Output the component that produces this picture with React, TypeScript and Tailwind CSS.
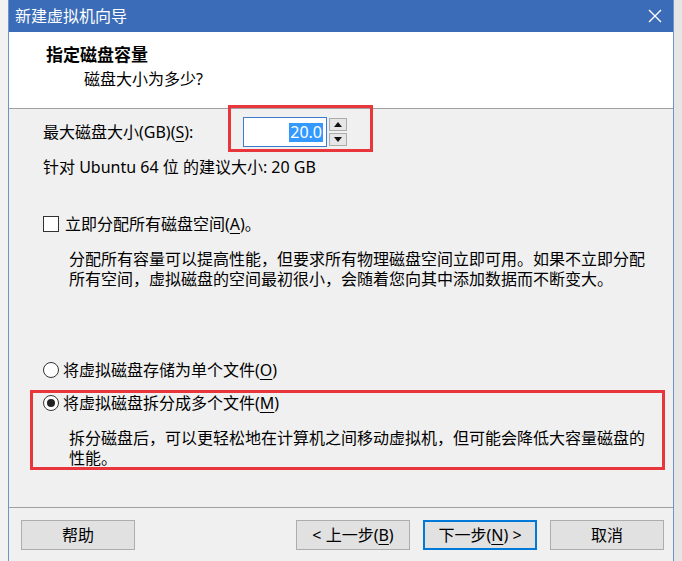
const U = ({ children }: { children: string }) => (
  <span className="underline underline-offset-[3px] decoration-1">{children}</span>
);

const Btn = ({ children, primary }: { children: React.ReactNode; primary?: boolean }) => (
  <button
    className={
      primary
        ? "w-[114px] h-[30px] bg-[#e1e1e1] border-2 border-[#0078d7] text-[16px] leading-[20px]"
        : "w-[114px] h-[30px] bg-[#e1e1e1] border border-[#adadad] text-[16px] leading-[20px]"
    }
  >
    {children}
  </button>
);

const SpinArrow = ({ up }: { up?: boolean }) => (
  <svg width="8" height="5" viewBox="0 0 8 5">
    <path d={up ? "M0 5 L4 0 L8 5 Z" : "M0 0 L4 5 L8 0 Z"} fill="#111" />
  </svg>
);

export default function App() {
  return (
    <div className="w-[682px] h-[561px] flex overflow-hidden bg-[#ececec] text-black font-['Noto_Sans','Noto_Sans_CJK_SC',sans-serif]">
      <div className="w-[8px] shrink-0 bg-[#f2f2f2]" />

      <div className="relative w-[666px] shrink-0 h-full flex flex-col border-x border-[#6f93cc] bg-[#f0f0f0]">
        {/* title bar */}
        <div className="h-[32px] shrink-0 bg-[#3b6cb7] flex items-center justify-between pl-[6px] pr-[10px]">
          <span className="text-white text-[16px] leading-[20px]">新建虚拟机向导</span>
          <svg width="16" height="16" viewBox="0 0 16 16">
            <path d="M2 2 L14 14 M14 2 L2 14" stroke="#fff" strokeWidth="1.4" />
          </svg>
        </div>

        {/* header */}
        <div className="h-[77px] shrink-0 bg-white border-b border-[#a0a0a0] pt-[12px] flex flex-col">
          <div className="pl-[37px] text-[17px] leading-[22px] font-bold">指定磁盘容量</div>
          <div className="pl-[75px] mt-[2px] text-[16px] leading-[22px]">磁盘大小为多少?</div>
        </div>

        {/* body */}
        <div className="h-[398px] shrink-0 pt-[8px] pl-[34px] pr-[10px] flex flex-col text-[16px] leading-[20px]">
          <div className="flex items-center h-[30px]">
            <span className="w-[200px] shrink-0">
              最大磁盘大小(GB)(<U>S</U>):
            </span>
            <div className="w-[84px] h-[30px] bg-white border border-[#3d7bd0] flex items-center justify-end pr-[3px]">
              <span className="bg-[#3399ff] text-white px-[1px] leading-[19px]">20.0</span>
            </div>
            <div className="w-[20px] h-[30px] flex flex-col justify-between py-[1px] pl-[2px]">
              <div className="h-[13px] bg-[#e6e6e6] border border-[#acacac] flex items-center justify-center">
                <SpinArrow up />
              </div>
              <div className="h-[13px] bg-[#e6e6e6] border border-[#acacac] flex items-center justify-center">
                <SpinArrow />
              </div>
            </div>
          </div>

          <div className="mt-[10px]">针对 Ubuntu 64 位 的建议大小: 20 GB</div>

          <div className="mt-[37px] flex items-center gap-[6px]">
            <span className="w-[16px] h-[16px] border border-[#333] bg-white shrink-0" />
            <span>
              立即分配所有磁盘空间(<U>A</U>)。
            </span>
          </div>
          <div className="mt-[15px] pl-[26px] whitespace-nowrap">
            分配所有容量可以提高性能，但要求所有物理磁盘空间立即可用。如果不立即分配
            <br />
            所有空间，虚拟磁盘的空间最初很小，会随着您向其中添加数据而不断变大。
          </div>

          <div className="mt-[71px] flex items-center gap-[4px]">
            <span className="w-[16px] h-[16px] rounded-full border border-[#333] bg-white shrink-0" />
            <span>
              将虚拟磁盘存储为单个文件(<U>O</U>)
            </span>
          </div>
          <div className="mt-[13px] flex items-center gap-[4px]">
            <span className="w-[16px] h-[16px] rounded-full border border-[#333] bg-white shrink-0 flex items-center justify-center">
              <span className="w-[8px] h-[8px] rounded-full bg-[#222]" />
            </span>
            <span>
              将虚拟磁盘拆分成多个文件(<U>M</U>)
            </span>
          </div>
          <div className="mt-[15px] pl-[26px] whitespace-nowrap">
            拆分磁盘后，可以更轻松地在计算机之间移动虚拟机，但可能会降低大容量磁盘的
            <br />
            性能。
          </div>
        </div>

        {/* footer */}
        <div className="flex-1 border-t border-[#a0a0a0] pt-[12px] pl-[12px] pr-[9px] flex items-start">
          <Btn>帮助</Btn>
          <div className="flex-1" />
          <div className="flex gap-[13px]">
            <Btn>
              &lt; 上一步(<U>B</U>)
            </Btn>
            <Btn primary>
              下一步(<U>N</U>) &gt;
            </Btn>
            <Btn>取消</Btn>
          </div>
        </div>

        {/* red annotation boxes */}
        <div className="absolute left-[219px] top-[105px] w-[145px] h-[47px] border-[3px] border-[#e8363c] pointer-events-none" />
        <div className="absolute left-[21px] top-[390px] w-[635px] h-[80px] border-[3px] border-[#e8363c] pointer-events-none" />
      </div>

      <div className="flex-1 bg-[#e6e6e6]" />
    </div>
  );
}
